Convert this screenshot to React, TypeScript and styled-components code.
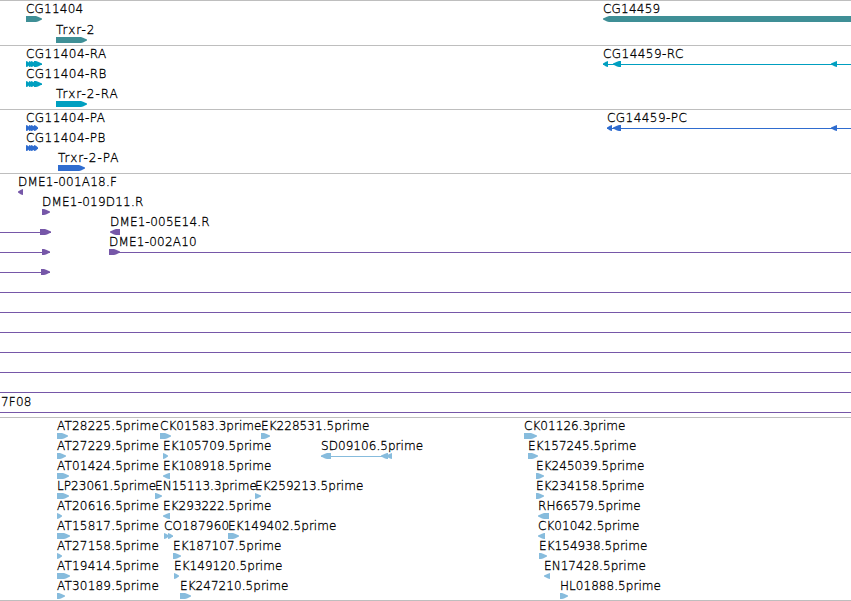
import React from 'react';
import styled, { createGlobalStyle } from 'styled-components';

const VIEW_WIDTH = 851;
const GLYPH_HEIGHT = 6;

type Direction = 'left' | 'right';

// [start, end, direction]
type Exon = [number, number, Direction];

interface Feature {
    label?: string;
    start: number;
    end: number;
    exons?: Exon[];
}

interface TrackData {
    name: string;
    color: string;
    laneHeight: number;
    bottom: number;
    lanes: Feature[][];
}

const GlobalStyle = createGlobalStyle`
    body {
        margin: 0;
        background: #ffffff;
        overflow: hidden;
    }
`;

const Viewer = styled.main`
    width: ${VIEW_WIDTH}px;
    overflow: hidden;
    border-bottom: 1px solid #bebebe;
    font-family: 'DejaVu Sans', sans-serif;
    font-size: 12px;
    font-weight: 200;
    -webkit-text-stroke: 0.3px #000000;
    color: #000000;
`;

const Track = styled.section<{ $bottom: number }>`
    border-top: 1px solid #bebebe;
    padding: 1px 0 ${(props) => props.$bottom}px;
`;

const Lane = styled.div<{ $height: number }>`
    display: grid;
    grid-template-columns: ${VIEW_WIDTH}px;
    height: ${(props) => props.$height}px;
`;

// Features of a lane share one grid cell and are offset by their start
const FeatureBox = styled.div<{ $start: number }>`
    grid-area: 1 / 1;
    margin-left: ${(props) => props.$start}px;
    display: flex;
    flex-direction: column;
    align-items: flex-start;
`;

const Label = styled.span<{ $spacing: number }>`
    height: 14px;
    line-height: 14px;
    letter-spacing: ${(props) => props.$spacing}px;
    white-space: pre;
`;

const Glyph = styled.svg`
    display: block;
    flex: none;
    overflow: visible;
`;

const exonPoints = ([start, end, direction]: Exon, origin: number) => {
    const a = start - origin;
    const b = end - origin;
    const head = Math.min(b - a, 6);
    if (direction === 'right') {
        return `${a},0 ${b - head},0 ${b - head + 2},0.8 ${b},2.6 ${b},3.4 ${b - head + 2},5.4 ${b - head},6 ${a},6`;
    }
    return `${b},0 ${a + head},0 ${a + head - 2},0.8 ${a},2.6 ${a},3.4 ${a + head - 2},5.4 ${a + head},6 ${b},6`;
};

const labelSpacing = (label = '') => {
    if (label.startsWith('Trxr')) return 1;
    if (/-[RP][A-C]$/.test(label)) return 0.45;
    if (label.startsWith('AT')) return 0.2;
    if (label.endsWith('prime')) return 0.05;
    return 0.22;
};

const right = (label: string, start: number, end: number): Feature => ({
    label,
    start,
    end,
    exons: [[start, end, 'right']],
});

const left = (label: string, start: number, end: number): Feature => ({
    label,
    start,
    end,
    exons: [[start, end, 'left']],
});

const spliced = (label: string, start: number, end: number): Feature => ({
    label,
    start,
    end,
    exons: [
        [start, start + 4, 'right'],
        [start + 3, start + 7, 'right'],
        [start + 5, start + 10, 'right'],
        [start + 8, end, 'right'],
    ],
});

const span: Feature = { start: 0, end: VIEW_WIDTH };

const tracks: TrackData[] = [
    {
        name: 'gene',
        color: '#3f8f96',
        laneHeight: 21,
        bottom: 1,
        lanes: [
            [right('CG11404', 26, 42), left('CG14459', 603, 860)],
            [right('Trxr-2', 56, 87)],
        ],
    },
    {
        name: 'transcript',
        color: '#009fc0',
        laneHeight: 20,
        bottom: 2,
        lanes: [
            [
                spliced('CG11404-RA', 26, 42),
                {
                    label: 'CG14459-RC',
                    start: 603,
                    end: VIEW_WIDTH,
                    exons: [[603, 608, 'left'], [613, 621, 'left'], [831, 837, 'left']],
                },
            ],
            [spliced('CG11404-RB', 26, 42)],
            [right('Trxr-2-RA', 56, 87)],
        ],
    },
    {
        name: 'protein',
        color: '#2f6ccf',
        laneHeight: 20,
        bottom: 2,
        lanes: [
            [
                spliced('CG11404-PA', 26, 38),
                {
                    label: 'CG14459-PC',
                    start: 607,
                    end: VIEW_WIDTH,
                    exons: [[607, 612, 'left'], [613, 621, 'left'], [831, 837, 'left']],
                },
            ],
            [spliced('CG11404-PB', 26, 38)],
            [right('Trxr-2-PA', 58, 85)],
        ],
    },
    {
        name: 'clone',
        color: '#7657a8',
        laneHeight: 20,
        bottom: 2,
        lanes: [
            [left('DME1-001A18.F', 18, 23)],
            [right('DME1-019D11.R', 42, 50)],
            [
                { start: 0, end: 51, exons: [[40, 51, 'right']] },
                left('DME1-005E14.R', 110, 120),
            ],
            [
                { start: 0, end: 50, exons: [[42, 50, 'right']] },
                { label: 'DME1-002A10', start: 109, end: VIEW_WIDTH, exons: [[109, 120, 'right']] },
            ],
            [{ start: 0, end: 50, exons: [[41, 50, 'right']] }],
            [span],
            [span],
            [span],
            [span],
            [span],
            [span],
            [{ label: '7F08', start: 1, end: VIEW_WIDTH }, span],
        ],
    },
    {
        name: 'est',
        color: '#87bcdd',
        laneHeight: 20,
        bottom: 1,
        lanes: [
            [
                right('AT28225.5prime', 57, 68),
                right('CK01583.3prime', 160, 171),
                right('EK228531.5prime', 261, 270),
                right('CK01126.3prime', 524, 537),
            ],
            [
                right('AT27229.5prime', 57, 66),
                right('EK105709.5prime', 163, 168),
                {
                    label: 'SD09106.5prime',
                    start: 321,
                    end: 392,
                    exons: [[321, 331, 'left'], [381, 388, 'left'], [386, 392, 'left']],
                },
                right('EK157245.5prime', 528, 538),
            ],
            [
                right('AT01424.5prime', 57, 69),
                left('EK108918.5prime', 163, 170),
                right('EK245039.5prime', 536, 544),
            ],
            [
                right('LP23061.5prime', 57, 69),
                right('EN15113.3prime', 155, 162),
                right('EK259213.5prime', 255, 261),
                right('EK234158.5prime', 536, 544),
            ],
            [
                right('AT20616.5prime', 57, 62),
                left('EK293222.5prime', 163, 170),
                left('RH66579.5prime', 538, 549),
            ],
            [
                right('AT15817.5prime', 57, 70),
                {
                    label: 'CO187960',
                    start: 164,
                    end: 173,
                    exons: [[164, 169, 'right'], [168, 173, 'right']],
                },
                right('EK149402.5prime', 228, 239),
                left('CK01042.5prime', 538, 545),
            ],
            [
                right('AT27158.5prime', 57, 62),
                right('EK187107.5prime', 173, 181),
                right('EK154938.5prime', 539, 547),
            ],
            [
                right('AT19414.5prime', 57, 70),
                right('EK149120.5prime', 174, 179),
                left('EN17428.5prime', 544, 550),
            ],
            [
                right('AT30189.5prime', 57, 65),
                right('EK247210.5prime', 180, 191),
                right('HL01888.5prime', 560, 568),
            ],
        ],
    },
];

const FeatureView = ({ feature, color }: { feature: Feature; color: string }) => {
    const { label, start, end, exons = [] } = feature;
    const width = end - start;
    const solid = exons.length === 1 && exons[0][0] === start && exons[0][1] === end;

    return (
        <FeatureBox $start={start}>
            <Label $spacing={labelSpacing(label)}>{label}</Label>
            <Glyph width={width} height={GLYPH_HEIGHT} fill={color}>
                {!solid && <rect x={0} y={3} width={width} height={1} />}
                {exons.map((exon) => (
                    <polygon key={exon[0]} points={exonPoints(exon, start)} />
                ))}
            </Glyph>
        </FeatureBox>
    );
};

const App = () => (
    <>
        <GlobalStyle />
        <Viewer>
            {tracks.map((track) => (
                <Track key={track.name} $bottom={track.bottom}>
                    {track.lanes.map((lane, i) => (
                        <Lane key={i} $height={track.laneHeight}>
                            {lane.map((feature) => (
                                <FeatureView
                                    key={feature.label || feature.start}
                                    feature={feature}
                                    color={track.color}
                                />
                            ))}
                        </Lane>
                    ))}
                </Track>
            ))}
        </Viewer>
    </>
);

export default App;
